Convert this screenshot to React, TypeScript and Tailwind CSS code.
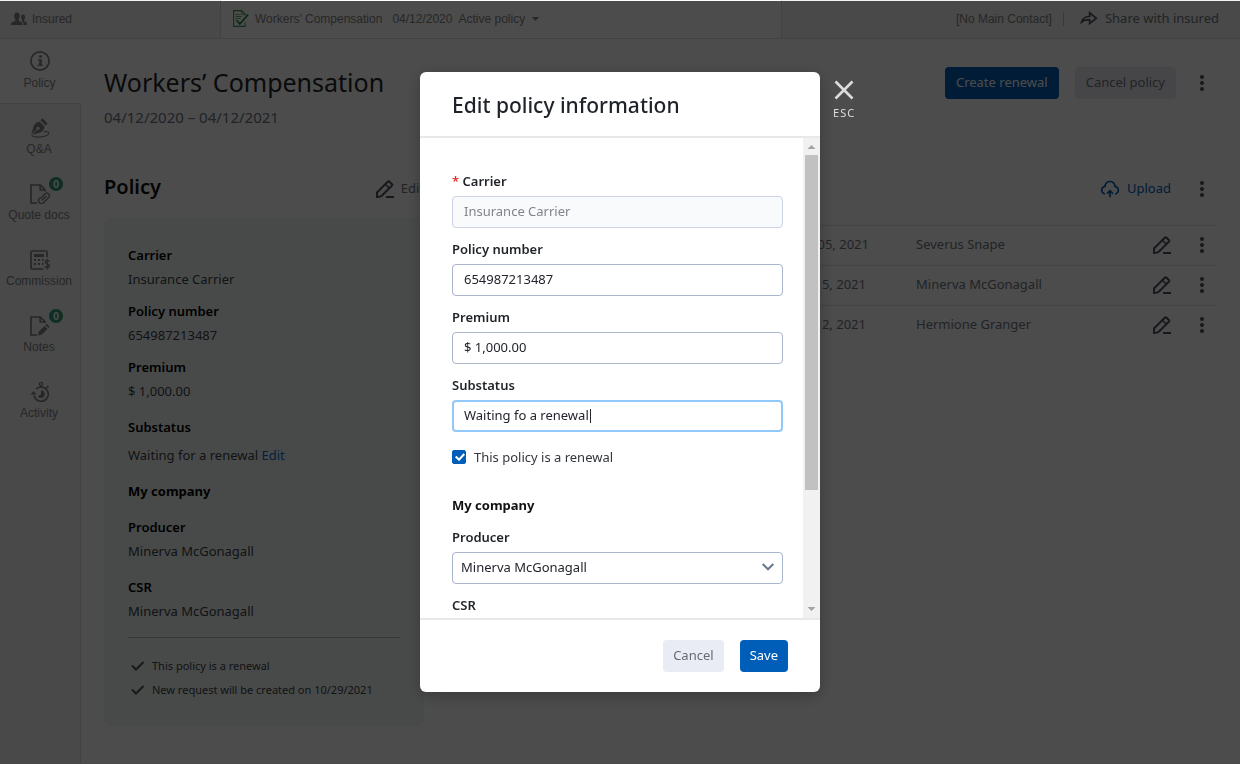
import { useState, type ReactNode, type UIEvent } from "react";
import { RiShareForwardLine, RiUploadCloud2Line } from "react-icons/ri";

const ARIAL = "font-['Liberation_Sans',Arial,sans-serif]";

/* ---------- icons ---------- */

function PeopleIcon() {
  return (
    <svg className="h-4 w-4" viewBox="0 0 16 16" fill="currentColor" aria-hidden="true">
      <path d="M6 1.500c1.800 0 2.700 1.400 2.700 3.300 0 1.500-.4 2.700-1.100 3.500v1.500c.8.900 3.100 1.100 3.600 2.100.3.500.4 1.200.4 2.100H0c0-.9.100-1.600.4-2.100.6-1 2.900-1.200 3.800-2.100V8.300C3.500 7.500 3.200 6.300 3.200 4.800 3.200 2.900 4.200 1.500 6 1.500z" />
      <path d="M12 3.500c1.400 0 2.100 1.100 2.100 2.600 0 1.200-.3 2.100-.9 2.700v1.300c.6.600 2 .8 2.500 1.600.3.500.3 1.300.3 2.300h-3.400c0-1.200-.1-2-.5-2.600-.3-.5-1-.9-1.700-1.200.3-.2.600-.6.600-1V8.800c-.6-.6-.9-1.500-.9-2.700 0-1.500.6-2.600 1.900-2.600z" />
    </svg>
  );
}

function DocCheckIcon() {
  return (
    <svg className="-mt-0.5 h-[17px] w-4" viewBox="0 0 16 17" fill="none" stroke="#3f9a52" aria-hidden="true">
      <path d="M12 12.500v3.900H.6V.6h8L12 4v1.500" strokeWidth="1.100" />
      <path d="M8.300.8v3.500H12M2.500 4.500h4M2.500 6.500h6M2.500 8.500h5M2.500 10.500h1" strokeWidth=".8" />
      <path d="M3.800 10.200l3 3.800 8.400-9.500" stroke="#1f8238" strokeWidth="1.700" />
    </svg>
  );
}

function InfoIcon() {
  return (
    <svg className="h-5 w-5" viewBox="0 0 20 20" fill="none" aria-hidden="true">
      <circle cx="10" cy="10" r="9.100" stroke="currentColor" strokeWidth="1.700" />
      <circle cx="10.500" cy="5.500" r="1.500" fill="currentColor" />
      <path d="M8 8.200h3.800v5.600h1.100V15H7.600v-1.200h1.600V9.400H8z" fill="currentColor" />
    </svg>
  );
}

function PenNibIcon() {
  return (
    <svg className="h-5 w-5" viewBox="0 0 20 20" fill="none" aria-hidden="true">
      <path d="M12.400.2l5.200 5.300-2 2-5.200-5.300z" fill="currentColor" />
      <path d="M9.500 3.600l5 5c-.2 2.900-1.700 5-4.300 6L1.200 17 3.500 9c1.100-3 3.200-4.900 6-5.400z" fill="currentColor" />
      <path d="M1.500 16.500l5.800-5.300" stroke="#f3f3f3" strokeWidth="1" />
      <circle cx="8" cy="10.300" r="1.500" fill="#f3f3f3" />
      <path
        d="M1.500 17.600c2.500 1.500 6.500 1.800 10 1.300 4.300-.6 7.200-2 7.200-3.800 0-1.300-1.900-1.700-4.700-1.400"
        stroke="currentColor"
        strokeWidth="1.100"
      />
    </svg>
  );
}

function DocClipIcon() {
  return (
    <svg className="h-5 w-5" viewBox="0 0 20 20" fill="none" stroke="currentColor" aria-hidden="true">
      <path d="M7 19H1V1h9.500L15 5.600V7.500M10.200 1v5H15" strokeWidth="1.700" />
      <path
        d="M10.500 14.500l4.400-4.600a2.500 2.500 0 0 1 3.700 3.500l-4.900 5.100a2.900 2.900 0 0 1-4.400-3.900l.8-.9M12 16.300l4.300-4.400"
        strokeWidth="1.400"
      />
    </svg>
  );
}

function CalculatorIcon() {
  return (
    <svg className="h-5 w-5" viewBox="0 0 20 20" fill="none" stroke="currentColor" aria-hidden="true">
      <path d="M13.500 19H2a1 1 0 0 1-1-1V2a1 1 0 0 1 1-1h14a1 1 0 0 1 1 1v5" strokeWidth="1.700" />
      <path d="M4 5.500h10" strokeWidth="3" />
      <path d="M4 10h2m2 0h2m2 0h1.500M4 14h2m2 0h2m2 0h1.500" strokeWidth="1.800" />
      <path
        d="M19.300 11.700c-.3-.9-1.100-1.300-2.100-1.300-1.200 0-2 .7-2 1.700 0 2.700 4.300 1.300 4.300 3.900 0 1.200-1 1.800-2.200 1.800s-2.100-.5-2.400-1.500M17.300 8.700v10.800"
        strokeWidth="1.300"
      />
    </svg>
  );
}

function DocPencilIcon() {
  return (
    <svg className="h-5 w-5" viewBox="0 0 20 20" fill="none" aria-hidden="true">
      <path d="M7 19H1V1h9.500L15 5.600V7M10.200 1v5H15" stroke="currentColor" strokeWidth="1.700" />
      <path
        d="M8 19.500l.8-3.900 5.700-5.700 3 3-5.700 5.700zM15.300 9l1.200-1.200 3.200 3-1.300 1.300z"
        fill="currentColor"
      />
    </svg>
  );
}

function StopwatchIcon() {
  return (
    <svg className="h-5 w-5" viewBox="0 0 20 20" fill="none" stroke="currentColor" aria-hidden="true">
      <circle cx="11" cy="2" r="1.600" strokeWidth="1.200" />
      <path d="M11 3.500V5M16.300 6l2-1.800" strokeWidth="1.600" />
      <path d="M4 13.500a7.200 7.200 0 1 0 2-6.400" strokeWidth="1.700" />
      <path d="M.5 12.500h6L3.500 9z" fill="currentColor" stroke="none" />
      <path d="M11 8.300a3.900 3.900 0 1 1-3.300 6L11 12.300z" fill="currentColor" stroke="none" />
    </svg>
  );
}

function EditIcon() {
  return (
    <svg className="h-[18px] w-[18px]" viewBox="0 0 18 18" fill="none" stroke="currentColor" strokeWidth="2" aria-hidden="true">
      <path d="M1 17v-4.500L12 1.500a.9.900 0 0 1 1.300 0l2.700 2.700a.9.900 0 0 1 0 1.300L6 15.500C5 16.500 3 17 1 17z" />
      <path d="M9.300 4.300l4 4" strokeWidth="1.600" />
      <path d="M10 17h8" />
    </svg>
  );
}

function DotsIcon() {
  return (
    <svg className="h-4 w-1" viewBox="0 0 4 16" fill="currentColor" aria-hidden="true">
      <circle cx="2" cy="2" r="2" />
      <circle cx="2" cy="8" r="2" />
      <circle cx="2" cy="14" r="2" />
    </svg>
  );
}

function TickIcon() {
  return (
    <svg className="h-[10px] w-[14px]" viewBox="0 0 14 10" fill="none" stroke="currentColor" strokeWidth="2" aria-hidden="true">
      <path d="M1 4.500l4 4L12.500 1" />
    </svg>
  );
}

/* ---------- page behind the dialog ---------- */

function DotsButton({ label }: { label: string }) {
  return (
    <button type="button" aria-label={label} className="flex h-8 w-7 items-center justify-center text-[#4b5060]">
      <DotsIcon />
    </button>
  );
}

function TopBar() {
  return (
    <header className={`flex h-[39px] items-stretch border-b border-[#dcdcdc] bg-[#f3f3f3] text-xs text-[#848484] ${ARIAL}`}>
      <a href="#insured" className="flex w-[220px] shrink-0 items-center gap-[5px] pl-[11px]">
        <PeopleIcon />
        Insured
      </a>
      <button type="button" className="flex w-[562px] shrink-0 items-center border-x border-[#dcdcdc] bg-white pl-3">
        <DocCheckIcon />
        <span className="ml-1.5">Workers’ Compensation</span>
        <span className="ml-2.5">04/12/2020</span>
        <span className="ml-1.5">Active policy</span>
        <svg className="ml-[7px] h-1 w-[7px]" viewBox="0 0 7 4" fill="#848484" aria-hidden="true">
          <path d="M0 0h7L3.500 4z" />
        </svg>
      </button>
      <div className="flex grow items-center justify-end pr-[21px]">
        <span>[No Main Contact]</span>
        <span className="ml-[11px] h-[14px] w-px bg-[#b9bdc9]" />
        <a href="#share" className="ml-[14px] flex items-center gap-[7px] font-['Noto_Sans','Open_Sans',sans-serif] text-[13px] text-[#70757f]">
          <RiShareForwardLine className="h-5 w-5 text-[#4b5060]" />
          Share with insured
        </a>
      </div>
    </header>
  );
}

const NAV: { label: string; icon: ReactNode; badge?: number }[] = [
  { label: "Q&A", icon: <PenNibIcon /> },
  { label: "Quote docs", icon: <DocClipIcon />, badge: 0 },
  { label: "Commission", icon: <CalculatorIcon /> },
  { label: "Notes", icon: <DocPencilIcon />, badge: 0 },
  { label: "Activity", icon: <StopwatchIcon /> },
];

function SideNav() {
  return (
    <nav className={`flex w-[81px] shrink-0 flex-col text-xs text-[#848484] ${ARIAL}`}>
      <a href="#policy" className="flex h-16 flex-col items-center gap-1 pt-3 pr-0.5">
        <InfoIcon />
        Policy
      </a>
      <div className="grow border-t border-r border-[#dcdcdc] bg-[#f3f3f3]">
        {NAV.map((item) => (
          <a key={item.label} href="#section" className="flex h-[66px] flex-col items-center gap-[3px] pt-[14px] whitespace-nowrap">
            <span className="relative">
              {item.icon}
              {item.badge !== undefined && (
                <span className="absolute -top-[7px] left-[19px] flex h-[14px] w-[14px] items-center justify-center rounded-full bg-[#2f9c7b] text-[11px] font-bold text-white">
                  {item.badge}
                </span>
              )}
            </span>
            <span className="pr-0.5">{item.label}</span>
          </a>
        ))}
      </div>
    </nav>
  );
}

function Fact({ name, children, spaced }: { name: string; children: ReactNode; spaced?: boolean }) {
  return (
    <div className={spaced ? "flex flex-col gap-1" : "flex flex-col"}>
      <dt className="font-semibold text-black">{name}</dt>
      <dd>{children}</dd>
    </div>
  );
}

function PolicyCard() {
  return (
    <div className="rounded-lg bg-[#f1f9f6] px-6 pt-[25px] pb-6 text-[13px] leading-6 text-[#3c4048]">
      <dl className="flex flex-col gap-2">
        <Fact name="Carrier">Insurance Carrier</Fact>
        <Fact name="Policy number">654987213487</Fact>
        <Fact name="Premium">$ 1,000.00</Fact>
      </dl>
      <dl className="mt-3">
        <Fact name="Substatus" spaced>
          Waiting for a renewal{" "}
          <a href="#edit" className="text-[#0a6ccf]">
            Edit
          </a>
        </Fact>
      </dl>
      <h3 className="mt-3 font-bold text-black">My company</h3>
      <dl className="mt-3 flex flex-col gap-3">
        <Fact name="Producer">Minerva McGonagall</Fact>
        <Fact name="CSR">Minerva McGonagall</Fact>
      </dl>
      <ul className="mt-[14px] border-t border-[#b0b6c8] pt-4 text-[11px]">
        {["This policy is a renewal", "New request will be created on 10/29/2021"].map((line) => (
          <li key={line} className="flex items-center gap-[7px] pl-[3px]">
            <span className="text-[#4b5060]">
              <TickIcon />
            </span>
            {line}
          </li>
        ))}
      </ul>
    </div>
  );
}

const ROWS = [
  { date: "Nov 05, 2021", person: "Severus Snape" },
  { date: "Oct 15, 2021", person: "Minerva McGonagall" },
  { date: "Oct 12, 2021", person: "Hermione Granger" },
];

function Documents() {
  return (
    <section className="min-w-0 grow">
      <div className="flex h-[34px] items-end justify-end gap-3">
        <button type="button" className="flex h-8 items-center gap-[7px] pr-[5px] text-[13px] text-[#005eb8]">
          <RiUploadCloud2Line className="h-5 w-5" />
          Upload
        </button>
        <DotsButton label="Document actions" />
      </div>
      <table className="mt-5 w-full table-fixed text-left text-[13px] text-[#70757f]">
        <colgroup>
          <col />
          <col className="w-[126px]" />
          <col className="w-[232px]" />
          <col className="w-[68px]" />
        </colgroup>
        <tbody>
          {ROWS.map((row) => (
            <tr key={row.person} className="h-10 border-t border-[#dde0e8]">
              <td />
              <td className="pb-0.5">{row.date}</td>
              <td className="pb-0.5">{row.person}</td>
              <td className="pb-0.5">
                <div className="flex items-center gap-3">
                  <button type="button" aria-label={`Edit ${row.person}`} className="flex h-8 w-7 items-center justify-center text-[#4b5060]">
                    <EditIcon />
                  </button>
                  <DotsButton label={`Actions for ${row.person}`} />
                </div>
              </td>
            </tr>
          ))}
        </tbody>
      </table>
    </section>
  );
}

function PolicyPage() {
  return (
    <div className="flex min-h-screen flex-col">
      <TopBar />
      <div className="flex grow">
        <SideNav />
        <main className="min-w-0 grow pt-7 pr-6 pb-9 pl-[23px]">
          <div className="flex h-8 items-center gap-4">
            <h1 className="grow text-[25px] text-[#22252b]">Workers’ Compensation</h1>
            <button type="button" className="h-8 rounded bg-[#005eb8] px-[11px] text-[13px] text-white">
              Create renewal
            </button>
            <div className="flex items-center gap-3">
              <button type="button" className="h-8 rounded bg-[#e9ecf5] px-[11px] text-[13px] text-[#70757f]">
                Cancel policy
              </button>
              <DotsButton label="Policy actions" />
            </div>
          </div>
          <p className="mt-1.5 text-[15px] leading-6 text-[#70757f]">04/12/2020 – 04/12/2021</p>
          <div className="mt-[42px] flex items-start gap-6">
            <section className="w-80 shrink-0">
              <div className="mb-[13px] flex h-[34px] items-center justify-between">
                <h2 className="pb-0.5 text-xl font-semibold text-[#111]">Policy</h2>
                <button type="button" className="flex items-center gap-[7px] pt-0.5 text-[13px] text-[#70757f]">
                  <span className="text-[#4b5060]">
                    <EditIcon />
                  </span>
                  Edit
                </button>
              </div>
              <PolicyCard />
            </section>
            <Documents />
          </div>
        </main>
      </div>
    </div>
  );
}

/* ---------- dialog ---------- */

const LABEL = "block text-[13px] leading-5 font-semibold text-[#1f2329]";
const BOX = "h-8 w-full rounded px-[11px] pb-0.5 text-[13px] outline-none";

function Field({ id, label, children }: { id: string; label: ReactNode; children: ReactNode }) {
  return (
    <div className="flex flex-col gap-[5px]">
      <label htmlFor={id} className={LABEL}>
        {label}
      </label>
      {children}
    </div>
  );
}

function Picker({ id, value }: { id: string; value: string }) {
  return (
    <div className="relative">
      <select id={id} defaultValue={value} className="h-8 w-full appearance-none rounded border border-[#a9b5cb] bg-white px-2 pb-px text-[13px] text-[#22252b] outline-none">
        <option>{value}</option>
      </select>
      <svg className="pointer-events-none absolute top-[11px] right-[9px] h-2 w-3" viewBox="0 0 12 8" fill="none" stroke="#6b7890" strokeWidth="2" aria-hidden="true">
        <path d="M.7 1L6 6.300 11.300 1" />
      </svg>
    </div>
  );
}

function EditDialog() {
  const [scroll, setScroll] = useState(0);
  const onScroll = (e: UIEvent<HTMLDivElement>) => {
    const el = e.currentTarget;
    setScroll(el.scrollTop / Math.max(1, el.scrollHeight - el.clientHeight));
  };

  return (
    <div className="fixed inset-x-0 top-px bottom-0 flex justify-center bg-black/70 pt-[71px] pb-18">
      <div role="dialog" aria-modal="true" aria-labelledby="dialog-title" className="relative flex h-full w-[400px] flex-col rounded-md bg-white shadow-[0_4px_16px_rgba(0,0,0,0.25)]">
        <h2 id="dialog-title" className="border-b-2 border-[#e8e8e8] px-8 pt-[18px] pb-4 text-[21px] leading-[30px] font-medium text-[#1f2329]">
          Edit policy information
        </h2>

        <div className="flex min-h-0 grow">
          <div onScroll={onScroll} className="min-w-0 grow overflow-y-auto pt-[33px] pr-5 pb-6 pl-8 [scrollbar-width:none]">
            <div className="flex flex-col gap-[11px]">
              <Field
                id="carrier"
                label={
                  <>
                    <span className="text-[#e5302d]">*</span> Carrier
                  </>
                }
              >
                <input id="carrier" disabled defaultValue="Insurance Carrier" className={`${BOX} border border-[#cbd2e3] bg-[#f9fafc] text-[#808389]`} />
              </Field>
              <Field id="number" label="Policy number">
                <input id="number" defaultValue="654987213487" className={`${BOX} border border-[#a9b5cb] text-[#22252b]`} />
              </Field>
              <Field id="premium" label="Premium">
                <input id="premium" defaultValue="$ 1,000.00" className={`${BOX} border border-[#a9b5cb] text-[#22252b]`} />
              </Field>
              <Field id="substatus" label="Substatus">
                <div className="relative">
                  <input id="substatus" defaultValue="Waiting fo a renewal" className="h-8 w-full rounded border-2 border-[#90c8fa] px-2.5 pb-0.5 text-[13px] text-[#22252b] caret-transparent outline-none" />
                  <span className="pointer-events-none absolute top-[9px] left-[138px] h-[14px] w-px bg-[#22252b]" />
                </div>
              </Field>
            </div>

            <div className="mt-[15px] flex items-center gap-2 text-[13px] leading-5 text-[#33363c]">
              <span className="relative flex h-[14px] w-[14px]">
                <input id="renewal" type="checkbox" defaultChecked className="h-[14px] w-[14px] appearance-none rounded-xs border border-[#005eb8] checked:bg-[#005eb8]" />
                <svg className="pointer-events-none absolute top-[3px] left-[3px] h-2 w-[10px]" viewBox="0 0 10 8" fill="none" stroke="white" strokeWidth="2" aria-hidden="true">
                  <path d="M.7 3.500L4 6.700 9.300 1" />
                </svg>
              </span>
              <label htmlFor="renewal">This policy is a renewal</label>
            </div>

            <h3 className="mt-7 text-[13px] leading-5 font-bold text-[#111]">My company</h3>
            <div className="mt-3 flex flex-col gap-[11px]">
              <Field id="producer" label="Producer">
                <Picker id="producer" value="Minerva McGonagall" />
              </Field>
              <Field id="csr" label="CSR">
                <Picker id="csr" value="Minerva McGonagall" />
              </Field>
            </div>
          </div>

          <div aria-hidden="true" className="flex w-[17px] shrink-0 flex-col items-center bg-[#f1f1f1]">
            <svg className="h-[17px] w-[17px] shrink-0" viewBox="0 0 17 17" fill="#a3a3a3">
              <path d="M4.500 11h8L8.500 7z" />
            </svg>
            <div className="flex w-[13px] grow flex-col">
              <div style={{ flexGrow: scroll }} />
              <div className="h-3/4 bg-[#c1c1c1]" />
            </div>
            <svg className="h-[17px] w-[17px] shrink-0" viewBox="0 0 17 17" fill="#a3a3a3">
              <path d="M4.500 6h8l-4 4z" />
            </svg>
          </div>
        </div>

        <div className="flex justify-end gap-4 border-t-2 border-[#e8e8e8] px-8 py-5 text-[13px]">
          <button type="button" className="h-8 rounded bg-[#e9ecf5] px-2.5 pb-px text-[#666a75]">
            Cancel
          </button>
          <button type="button" className="h-8 rounded bg-[#005eb8] px-2.5 pb-px text-white">
            Save
          </button>
        </div>

        <button type="button" className="absolute top-2 left-full ml-[13px] flex flex-col items-center gap-[5px] text-[11px] tracking-widest text-[#dcdcdc]">
          <svg className="h-5 w-5" viewBox="0 0 20 20" fill="none" stroke="currentColor" strokeWidth="2.600" aria-hidden="true">
            <path d="M1.500 1.500l17 17M18.500 1.500l-17 17" />
          </svg>
          ESC
        </button>
      </div>
    </div>
  );
}

export default function App() {
  return (
    <div className="bg-white font-['Noto_Sans','Open_Sans',sans-serif]">
      <PolicyPage />
      <EditDialog />
    </div>
  );
}
